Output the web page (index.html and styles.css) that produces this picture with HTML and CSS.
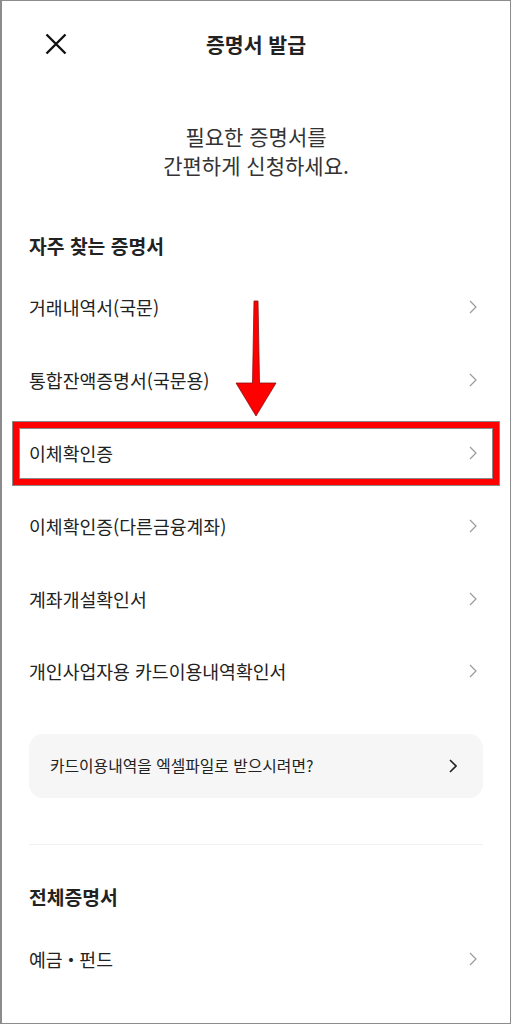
FILE: index.html
```html
<!DOCTYPE html>
<html lang="ko">
<head>
<meta charset="utf-8">
<title>증명서 발급</title>
<link rel="stylesheet" href="styles.css">
</head>
<body>
<div class="frame">
  <header class="header">
    <button class="close" aria-label="닫기">
      <svg width="22" height="22" viewBox="0 0 22 22"><path d="M1.5 1.5 L20.5 20.5 M20.5 1.5 L1.5 20.5" stroke="#111" stroke-width="2.4" fill="none"/></svg>
    </button>
    <h1 class="title">증명서 발급</h1>
  </header>

  <p class="intro">필요한 증명서를<br>간편하게 신청하세요.</p>

  <h2 class="section-title first">자주 찾는 증명서</h2>
  <ul class="list">
    <li class="item"><span>거래내역서(국문)</span><svg class="chev" width="8" height="14" viewBox="0 0 8 14"><path d="M1 1 L7 7 L1 13" stroke="#9a9a9a" stroke-width="1.2" fill="none"/></svg></li>
    <li class="item"><span>통합잔액증명서(국문용)</span><svg class="chev" width="8" height="14" viewBox="0 0 8 14"><path d="M1 1 L7 7 L1 13" stroke="#9a9a9a" stroke-width="1.2" fill="none"/></svg></li>
    <li class="item"><span>이체확인증</span><svg class="chev" width="8" height="14" viewBox="0 0 8 14"><path d="M1 1 L7 7 L1 13" stroke="#9a9a9a" stroke-width="1.2" fill="none"/></svg></li>
    <li class="item"><span>이체확인증(다른금융계좌)</span><svg class="chev" width="8" height="14" viewBox="0 0 8 14"><path d="M1 1 L7 7 L1 13" stroke="#9a9a9a" stroke-width="1.2" fill="none"/></svg></li>
    <li class="item"><span>계좌개설확인서</span><svg class="chev" width="8" height="14" viewBox="0 0 8 14"><path d="M1 1 L7 7 L1 13" stroke="#9a9a9a" stroke-width="1.2" fill="none"/></svg></li>
    <li class="item"><span>개인사업자용 카드이용내역확인서</span><svg class="chev" width="8" height="14" viewBox="0 0 8 14"><path d="M1 1 L7 7 L1 13" stroke="#9a9a9a" stroke-width="1.2" fill="none"/></svg></li>
  </ul>

  <div class="card">
    <span>카드이용내역을 엑셀파일로 받으시려면?</span>
    <svg width="8" height="14" viewBox="0 0 8 14"><path d="M1 1 L7 7 L1 13" stroke="#222" stroke-width="1.6" fill="none"/></svg>
  </div>

  <hr class="divider">

  <h2 class="section-title second">전체증명서</h2>
  <ul class="list">
    <li class="item"><span>예금 <b class="dot">·</b> 펀드</span><svg class="chev" width="8" height="14" viewBox="0 0 8 14"><path d="M1 1 L7 7 L1 13" stroke="#9a9a9a" stroke-width="1.2" fill="none"/></svg></li>
  </ul>

  <div class="highlight"></div>
  <svg class="arrow" width="50" height="124" viewBox="0 0 50 124">
    <polygon points="24,5 28,5 29.5,87 46,87 26,120 6,87 22.5,87" fill="#ff0000" stroke="#8a1010" stroke-width="0.8" stroke-linejoin="miter"/>
  </svg>
</div>
</body>
</html>
```

FILE: styles.css
```css
* { box-sizing: border-box; }
html, body { margin: 0; padding: 0; background: #fff; }
body {
  font-family: "Noto Sans CJK KR", "Noto Sans", sans-serif;
  color: #222;
}
.frame {
  position: relative;
  width: 511px;
  height: 1024px;
  border: 1px solid #8c8c8c;
  border-left-width: 2px;
  overflow: hidden;
  background: #fff;
}
.header {
  position: relative;
  height: 86px;
  display: flex;
  align-items: center;
  justify-content: center;
}
.close {
  position: absolute;
  left: 42px;
  top: 31px;
  width: 24px;
  height: 24px;
  padding: 0;
  border: 0;
  background: none;
  display: flex;
  align-items: center;
  justify-content: center;
}
.title {
  margin: 0;
  font-size: 20.5px;
  font-weight: 700;
  color: #222;
  line-height: 1;
}
.intro {
  margin: 35px 0 0;
  text-align: center;
  font-size: 21px;
  line-height: 29px;
  color: #333;
}
.section-title {
  margin: 0;
  padding-left: 27px;
  font-size: 19.3px;
  font-weight: 700;
  line-height: 28px;
  color: #222;
}
.section-title.first { margin-top: 52px; }
.section-title.second { margin-top: 38px; }
.list {
  list-style: none;
  margin: 11px 0 0;
  padding: 0;
}
.item {
  height: 72.8px;
  display: flex;
  align-items: center;
  justify-content: space-between;
  padding: 0 33px 0 27px;
  font-size: 18.3px;
  color: #222;
}
.dot { font-weight: 900; }
.second + .list { margin-top: 12px; }
.card {
  margin: 26px 27px 0 27px;
  height: 64px;
  border-radius: 14px;
  background: #f6f6f6;
  display: flex;
  align-items: center;
  justify-content: space-between;
  padding: 0 26px 0 21px;
  font-size: 15.8px;
  color: #222;
}
.divider {
  margin: 46px 27px 0 27px;
  border: 0;
  border-top: 1px solid #f0f0f0;
  height: 0;
}
.highlight {
  position: absolute;
  left: 11px;
  top: 421px;
  width: 486px;
  height: 63px;
  border: 6px solid #ff0000;
  box-shadow: 0 0 0 1px #8a8a8a, inset 0 0 0 1px #8a8a8a;
}
.arrow {
  position: absolute;
  left: 228px;
  top: 295px;
}
```
